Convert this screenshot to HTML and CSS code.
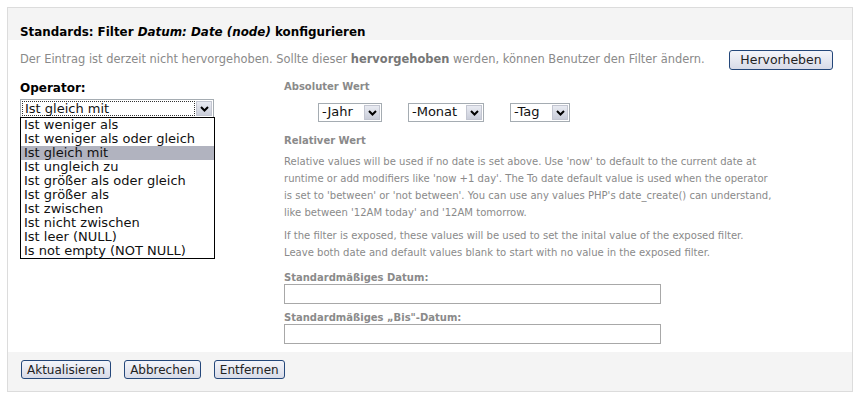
FILE: index.html
```html
<!DOCTYPE html>
<html lang="de">
<head>
<meta charset="utf-8">
<link rel="stylesheet" href="styles.css">
</head>
<body>
<div class="panel">
  <div class="head">
    <h1>Standards: Filter <em>Datum: Date (node)</em> konfigurieren</h1>
  </div>
  <div class="body">
    <div class="notice">
      <p>Der Eintrag ist derzeit nicht hervorgehoben. Sollte dieser <strong>hervorgehoben</strong> werden, können Benutzer den Filter ändern.</p>
      <button class="btn btn-hl">Hervorheben</button>
    </div>
    <div class="cols">
      <div class="left">
        <div class="label">Operator:</div>
        <div class="sel sel-op">
          <span class="sel-val focus">Ist gleich mit</span>
          <span class="arrow"><svg width="9" height="6" viewBox="0 0 9 6"><path d="M1 1 L4.5 4.5 L8 1" fill="none" stroke="#000" stroke-width="2"/></svg></span>
          <ul class="list">
            <li>Ist weniger als</li>
            <li>Ist weniger als oder gleich</li>
            <li class="on">Ist gleich mit</li>
            <li>Ist ungleich zu</li>
            <li>Ist größer als oder gleich</li>
            <li>Ist größer als</li>
            <li>Ist zwischen</li>
            <li>Ist nicht zwischen</li>
            <li>Ist leer (NULL)</li>
            <li>Is not empty (NOT NULL)</li>
          </ul>
        </div>
      </div>
      <div class="right">
        <div class="sub sub1">Absoluter Wert</div>
        <div class="dates">
          <div class="sel sel-y"><span class="sel-val">-Jahr</span><span class="arrow"><svg width="9" height="6" viewBox="0 0 9 6"><path d="M1 1 L4.5 4.5 L8 1" fill="none" stroke="#000" stroke-width="2"/></svg></span></div>
          <div class="sel sel-m"><span class="sel-val">-Monat</span><span class="arrow"><svg width="9" height="6" viewBox="0 0 9 6"><path d="M1 1 L4.5 4.5 L8 1" fill="none" stroke="#000" stroke-width="2"/></svg></span></div>
          <div class="sel sel-d"><span class="sel-val">-Tag</span><span class="arrow"><svg width="9" height="6" viewBox="0 0 9 6"><path d="M1 1 L4.5 4.5 L8 1" fill="none" stroke="#000" stroke-width="2"/></svg></span></div>
        </div>
        <div class="sub sub2">Relativer Wert</div>
        <p class="help">Relative values will be used if no date is set above. Use 'now' to default to the current date at runtime or add modifiers like 'now +1 day'. The To date default value is used when the operator is set to 'between' or 'not between'. You can use any values PHP's date_create() can understand, like between '12AM today' and '12AM tomorrow.</p>
        <p class="help help2">If the filter is exposed, these values will be used to set the inital value of the exposed filter. Leave both date and default values blank to start with no value in the exposed filter.</p>
        <div class="sub sub3">Standardmäßiges Datum:</div>
        <div class="input in1"></div>
        <div class="sub sub4">Standardmäßiges „Bis"-Datum:</div>
        <div class="input in2"></div>
      </div>
    </div>
  </div>
  <div class="foot">
    <button class="btn">Aktualisieren</button>
    <button class="btn">Abbrechen</button>
    <button class="btn">Entfernen</button>
  </div>
</div>
</body>
</html>
```
FILE: styles.css
```css
* { box-sizing: border-box; }
html, body { margin: 0; padding: 0; background: #fff; }
body {
  padding: 7px 6px 2px 7px;
  font-family: "DejaVu Sans", Verdana, sans-serif;
  color: #000;
}
.panel {
  border: 1px solid #dcdcdc;
  width: 846px;
  height: 385px;
  display: flex;
  flex-direction: column;
}
.head {
  background: #f4f4f4;
  height: 32px;
  padding: 17px 0 0 12px;
}
h1 {
  margin: 0;
  font-size: 11.9px;
  font-weight: bold;
  line-height: 14px;
}
h1 em { font-style: italic; }
.body { flex: 1; padding: 0 0 0 12px; }
.notice {
  display: flex;
  align-items: flex-start;
  height: 43px;
  padding-top: 10px;
}
.notice p {
  margin: 3px 0 0;
  font-size: 11.45px;
  color: #8a8a8a;
  line-height: 13px;
  width: 709px;
  white-space: nowrap;
}
.notice strong { color: #777; }
.btn {
  font-family: "DejaVu Sans", Verdana, sans-serif;
  font-size: 12px;
  color: #222;
  height: 19px;
  padding: 0 5px;
  border: 1px solid #24477a;
  border-radius: 3px;
  background: linear-gradient(#f4f5fa, #d8dbe8);
  line-height: 16px;
  margin: 0;
}
.btn-hl { width: 104px; height: 20px; font-size: 12.5px; }
.cols { display: flex; }
.left { width: 264px; }
.label {
  font-size: 12px;
  font-weight: bold;
  line-height: 14px;
  margin-top: -2px;
  margin-bottom: 4px;
}
.sel {
  position: relative;
  display: flex;
  height: 19px;
  border: 1px solid #a5acb2;
  background: #fff;
}
.sel-val {
  flex: 1;
  font-size: 13px;
  line-height: 15px;
  padding: 0 3px;
  color: #111;
  white-space: nowrap;
}
.sel-op { width: 194px; }
.sel-op .sel-val {
  border: 1px dotted #333;
  margin: 1px 0 1px 1px;
  line-height: 14px;
  padding-left: 2px;
}
.arrow {
  width: 16px;
  margin: 1px;
  background: linear-gradient(#e9ebf2, #c9cdd9);
  border: 1px solid #c3c6d1;
  display: flex;
  align-items: center;
  justify-content: center;
}
.list {
  position: absolute;
  left: -1px;
  top: 17px;
  width: 195px;
  margin: 0;
  padding: 0;
  list-style: none;
  border: 1px solid #000;
  background: #fff;
  z-index: 2;
}
.list li {
  font-size: 13px;
  line-height: 14px;
  height: 14px;
  padding-left: 3px;
  color: #111;
  white-space: nowrap;
}
.list li.on { background: #b1b3bf; }
.right { flex: 1; }
.sub {
  font-size: 10px;
  font-weight: bold;
  color: #8a8a8a;
  line-height: 12px;
}
.sub1 { margin-top: -2px; }
.dates {
  display: flex;
  gap: 26px;
  margin: 10px 0 0 34px;
}
.sel-y { width: 64px; }
.sel-m { width: 76px; }
.sel-d { width: 60px; }
.sub2 { margin-top: 13px; }
.help {
  margin: 6px 0 0;
  font-size: 10.05px;
  line-height: 17px;
  color: #8a8a8a;
  width: 490px;
}
.help2 { margin-top: 6px; }
.sub3 { margin-top: 11px; }
.input {
  width: 377px;
  height: 20px;
  border: 1px solid #a8a8a8;
}
.in1 { margin-top: 0; }
.sub4 { margin-top: 8px; }
.in2 { margin-top: 0; }
.foot {
  background: #f4f4f4;
  height: 39px;
  display: flex;
  align-items: flex-start;
  gap: 13px;
  padding: 8px 0 0 13px;
}
```
